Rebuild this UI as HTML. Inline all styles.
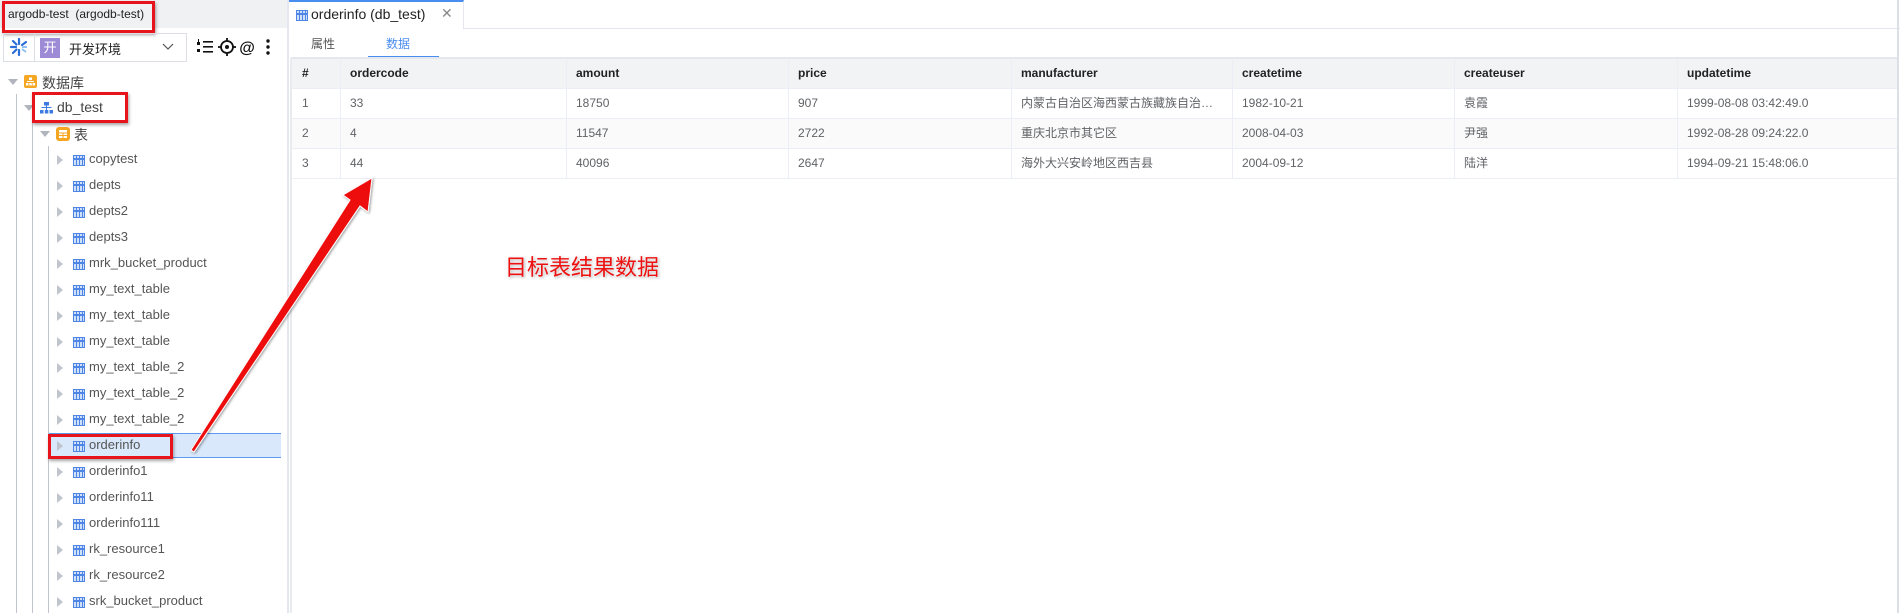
<!DOCTYPE html>
<html><head><meta charset="utf-8"><style>
*{margin:0;padding:0;box-sizing:border-box}
body{width:1900px;height:613px;overflow:hidden;background:#fff;font-family:"Liberation Sans","Noto Sans CJK SC",sans-serif;font-size:13px;color:#555;position:relative}
.a{position:absolute}
.tri{position:absolute;width:0;height:0;border-top:5px solid transparent;border-bottom:5px solid transparent;border-left:6px solid #c0c4cc}
.trid{position:absolute;width:0;height:0;border-left:5px solid transparent;border-right:5px solid transparent;border-top:6px solid #b0b4bc}
.tico{position:absolute;width:12px;height:11px;border:1px solid #4f86e6;background:
linear-gradient(#4f86e6,#4f86e6) 0 2px/100% 2px no-repeat,
repeating-linear-gradient(90deg,transparent 0 2px,#4f86e6 2px 3px),#cfe0fb}
.row{position:absolute;left:0;height:26px;line-height:26px}
td,th{position:absolute}
.cell{position:absolute;height:30px;line-height:30px;padding-left:10px;white-space:nowrap;overflow:hidden}
</style></head><body>
<!-- left panel -->
<div class="a" style="left:0;top:0;width:287px;height:28px;background:#f0f1f3"></div>
<div class="a" style="left:8px;top:7px;font-size:12px;color:#222">argodb-test &nbsp;(argodb-test)</div>
<div class="a" style="left:2px;top:1px;width:153px;height:32px;border:3px solid #e8141b;box-shadow:1px 2px 3px rgba(0,0,0,.35)"></div>
<div class="a" style="left:287px;top:0;width:2px;height:613px;background:#e4e7ed"></div>
<div class="a" style="left:3px;top:33px;width:184px;height:29px;border:1px solid #dcdfe6"></div>
<div class="a" style="left:34px;top:33px;width:1px;height:29px;background:#dcdfe6"></div>
<svg class="a" style="left:9px;top:37px" width="20" height="20" viewBox="0 0 20 20"><g stroke="#2d6fd8" stroke-width="2.2" stroke-linecap="round"><line x1="10" y1="2" x2="10" y2="7"/><line x1="4" y1="4" x2="7.5" y2="7.5"/><line x1="2" y1="10" x2="7" y2="10"/><line x1="4" y1="16" x2="7.5" y2="12.5"/><line x1="10" y1="13" x2="10" y2="18"/><line x1="13" y1="8" x2="17" y2="5"/></g><g stroke="#8fc1f5" stroke-width="2"><line x1="13" y1="12" x2="17" y2="15"/><line x1="13" y1="10" x2="18" y2="10"/></g></svg>
<div class="a" style="left:40px;top:38px;width:20px;height:20px;background:#9e8bd6;color:#fff;font-size:13px;text-align:center;line-height:20px">开</div>
<div class="a" style="left:69px;top:39px;font-size:13px;color:#222">开发环境</div>
<svg class="a" style="left:162px;top:43px" width="12" height="8"><path d="M1 1l5 5 5-5" fill="none" stroke="#555" stroke-width="1.2"/></svg>
<svg class="a" style="left:197px;top:38px" width="78" height="18" viewBox="0 0 78 18"><g fill="#111"><rect x="0" y="4" width="3" height="3"/><rect x="0" y="11" width="3" height="3"/><rect x="1" y="1" width="1" height="3"/><rect x="6" y="3" width="10" height="1.6"/><rect x="6" y="8" width="10" height="1.6"/><rect x="6" y="13" width="10" height="1.6"/></g><circle cx="30" cy="9" r="6" fill="none" stroke="#111" stroke-width="1.8"/><circle cx="30" cy="9" r="2" fill="#111"/><g stroke="#111" stroke-width="1.8"><line x1="30" y1="0" x2="30" y2="3"/><line x1="30" y1="15" x2="30" y2="18"/><line x1="21" y1="9" x2="24" y2="9"/><line x1="36" y1="9" x2="39" y2="9"/></g><text x="42" y="15" font-size="16" font-style="italic" font-weight="bold" fill="#111" font-family="Liberation Sans">@</text><g fill="#111"><circle cx="71" cy="3" r="1.7"/><circle cx="71" cy="9" r="1.7"/><circle cx="71" cy="15" r="1.7"/></g></svg>
<!-- tree lines -->
<div class="a" style="left:16px;top:94px;width:1px;height:519px;background:#c0c4cc"></div>
<div class="a" style="left:32px;top:120px;width:1px;height:493px;background:#c0c4cc"></div>
<div class="a" style="left:48px;top:146px;width:1px;height:467px;background:#c0c4cc"></div>
<div class="trid" style="left:8px;top:79px"></div>
<svg class="a" style="left:24px;top:75px" width="13" height="13"><rect width="13" height="13" rx="2" fill="#f5a623"/><g fill="#fff"><rect x="5" y="2.5" width="3" height="2.5"/><rect x="2" y="8" width="2.5" height="2.5"/><rect x="5.3" y="8" width="2.5" height="2.5"/><rect x="8.6" y="8" width="2.5" height="2.5"/><rect x="3" y="6" width="7" height="1"/></g></svg>
<div class="a" style="left:42px;top:73px;font-size:14px;color:#444">数据库</div>
<div class="trid" style="left:24px;top:105px"></div>
<svg class="a" style="left:40px;top:102px" width="13" height="12"><g fill="#3e7be0"><rect x="4" y="0" width="5" height="3.5"/><rect x="0" y="8" width="3.5" height="3.5"/><rect x="4.8" y="8" width="3.5" height="3.5"/><rect x="9.5" y="8" width="3.5" height="3.5"/><rect x="1.5" y="5" width="10" height="1"/><rect x="6" y="3" width="1" height="5"/></g></svg>
<div class="a" style="left:57px;top:99px;font-size:14px;color:#444">db_test</div>
<div class="a" style="left:32px;top:92px;width:96px;height:31px;border:3px solid #e8141b;box-shadow:1px 2px 3px rgba(0,0,0,.35)"></div>
<div class="trid" style="left:40px;top:131px"></div>
<svg class="a" style="left:56px;top:127px" width="14" height="14"><rect width="14" height="14" rx="3" fill="#f5a623"/><rect x="3" y="3" width="8" height="8" fill="#fff"/><g fill="#f5a623"><rect x="3" y="5.5" width="8" height="1"/><rect x="3" y="8" width="8" height="1"/><rect x="6.5" y="5.5" width="1" height="5.5"/></g></svg>
<div class="a" style="left:74px;top:125px;font-size:14px;color:#444">表</div>
<!-- highlight -->
<div class="a" style="left:49px;top:433px;width:232px;height:25px;background:#d9e8fb;border-top:1px solid #5b9af0;border-bottom:1px solid #5b9af0"></div>
<div id="tree"></div>
<div class="a" style="left:48px;top:434px;width:125px;height:25px;border:3px solid #e8141b;box-shadow:1px 2px 3px rgba(0,0,0,.35)"></div>
<!-- right area -->
<div class="a" style="left:289px;top:28px;width:1611px;height:1px;background:#e4e7ed"></div>
<div class="a" style="left:289px;top:0;width:175px;height:29px;background:#fff;border-right:1px solid #e4e7ed;border-top:2px solid #4a8df0"></div>
<div class="tico" style="left:296px;top:10px"></div>
<div class="a" style="left:311px;top:6px;font-size:14px;color:#222">orderinfo (db_test)</div>
<div class="a" style="left:441px;top:5px;font-size:14px;color:#888">✕</div>
<div class="a" style="left:311px;top:35px;font-size:12px;color:#555">属性</div>
<div class="a" style="left:386px;top:35px;font-size:12px;color:#4a8df0">数据</div>
<div class="a" style="left:368px;top:56px;width:71px;height:2px;background:#4a8df0"></div>
<div class="a" style="left:291px;top:57px;width:1607px;height:2px;background:#e4e7ed"></div>
<div class="a" style="left:1897px;top:0;width:2px;height:613px;background:#dcdfe6"></div>
<div class="a" style="left:290px;top:58px;width:2px;height:555px;background:#e8ebf0"></div>
<div id="tbl"></div>
<!-- arrow -->
<svg class="a" style="left:0;top:0" width="1900" height="613">
<defs><filter id="sh"><feDropShadow dx="1" dy="1" stdDeviation="1.2" flood-color="#000" flood-opacity=".4"/></filter></defs>
<g filter="url(#sh)"><path d="M191 450 L350 200 L343 195 L372 178 L368 212 L360 206 L194 452 Z" fill="#ee1111" stroke="#fff" stroke-width="1"/></g>
</svg>
<div class="a" style="left:505px;top:250px;font-size:22px;color:#ee1111;font-family:'Noto Sans CJK SC',sans-serif;text-shadow:0 0 2px #fff,1px 1px 3px rgba(0,0,0,.4)">目标表结果数据</div>
<script>
var items=["copytest","depts","depts2","depts3","mrk_bucket_product","my_text_table","my_text_table","my_text_table","my_text_table_2","my_text_table_2","my_text_table_2","orderinfo","orderinfo1","orderinfo11","orderinfo111","rk_resource1","rk_resource2","srk_bucket_product"];
var h="";items.forEach(function(t,i){var c=160+26*i;h+='<div class="tri" style="left:57px;top:'+(c-5)+'px"></div><div class="tico" style="left:73px;top:'+(c-5)+'px"></div><div class="a" style="left:89px;top:'+(c-9)+'px;font-size:13px;color:#555">'+t+'</div>';});
document.getElementById("tree").innerHTML=h;
var cols=[292,340,566,788,1011,1232,1454,1677,1897];
var head=["#","ordercode","amount","price","manufacturer","createtime","createuser","updatetime"];
var data=[["1","33","18750","907","内蒙古自治区海西蒙古族藏族自治…","1982-10-21","袁霞","1999-08-08 03:42:49.0"],["2","4","11547","2722","重庆北京市其它区","2008-04-03","尹强","1992-08-28 09:24:22.0"],["3","44","40096","2647","海外大兴安岭地区西吉县","2004-09-12","陆洋","1994-09-21 15:48:06.0"]];
var s='<div class="a" style="left:292px;top:59px;width:1605px;height:29px;background:#f2f3f5"></div>';
s+='<div class="a" style="left:292px;top:118px;width:1605px;height:30px;background:#fafafa"></div>';
[88,118,148,178].forEach(function(y){s+='<div class="a" style="left:292px;top:'+y+'px;width:1605px;height:1px;background:#ebeef5"></div>';});
for(var j=1;j<8;j++)s+='<div class="a" style="left:'+cols[j]+'px;top:59px;width:1px;height:119px;background:#ebeef5"></div>';
for(var j=0;j<8;j++){s+='<div class="cell" style="left:'+cols[j]+'px;top:58px;width:'+(cols[j+1]-cols[j])+'px;font-weight:bold;color:#222;font-size:12px">'+head[j]+'</div>';
for(var r=0;r<3;r++)s+='<div class="cell" style="left:'+cols[j]+'px;top:'+(88+30*r)+'px;width:'+(cols[j+1]-cols[j])+'px;font-size:12px;color:#606266">'+data[r][j]+'</div>';}
document.getElementById("tbl").innerHTML=s;
</script>
</body></html>
